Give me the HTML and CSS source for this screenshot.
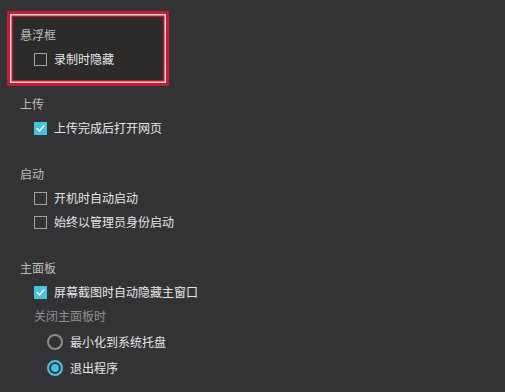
FILE: index.html
```html
<!DOCTYPE html>
<html lang="zh-CN">
<head>
<meta charset="utf-8">
<title>设置</title>
<link rel="stylesheet" href="styles.css">
</head>
<body>
<main class="page">
  <section class="group group--highlight">
    <div class="group-title">悬浮框</div>
    <label class="check-row"><span class="box"></span><span class="label">录制时隐藏</span></label>
  </section>

  <section class="group group--first">
    <div class="group-title">上传</div>
    <label class="check-row"><span class="box box--on"><svg viewBox="0 0 13 13" class="tick"><path d="M2.6 6.6 L5.3 9.4 L10.6 3.2" /></svg></span><span class="label">上传完成后打开网页</span></label>
  </section>

  <section class="group">
    <div class="group-title">启动</div>
    <label class="check-row"><span class="box"></span><span class="label">开机时自动启动</span></label>
    <label class="check-row"><span class="box"></span><span class="label">始终以管理员身份启动</span></label>
  </section>

  <section class="group">
    <div class="group-title">主面板</div>
    <label class="check-row"><span class="box box--on"><svg viewBox="0 0 13 13" class="tick"><path d="M2.6 6.6 L5.3 9.4 L10.6 3.2" /></svg></span><span class="label">屏幕截图时自动隐藏主窗口</span></label>
    <div class="sub-title">关闭主面板时</div>
    <div class="radios">
      <label class="radio-row"><span class="radio"></span><span class="label">最小化到系统托盘</span></label>
      <label class="radio-row"><span class="radio radio--on"></span><span class="label">退出程序</span></label>
    </div>
  </section>
</main>
</body>
</html>
```

FILE: styles.css
```css
html, body {
  margin: 0;
  padding: 0;
  background: #333335;
  width: 505px;
  height: 392px;
  overflow: hidden;
}

.page {
  padding: 11px 7px 0 7px;
  font-family: "Noto Sans CJK SC", "Noto Sans", sans-serif;
  font-size: 12px;
  color: #e4e4e4;
  display: flex;
  flex-direction: column;
}

.group {
  display: flex;
  flex-direction: column;
  padding-left: 13px;
  margin-top: 22px;
}

.group--first {
  margin-top: 6px;
}

.group--highlight {
  margin-top: 0;
  width: 162px;
  height: 75px;
  box-sizing: border-box;
  padding: 9px 0 0 10px;
  border: 3px solid #c41c33;
  box-shadow: inset 0 0 0 1.5px #f2d4d6, inset 0 0 0 3px #b51a2e;
  background: #2c2b29;
}

.group-title {
  height: 24px;
  line-height: 24px;
  color: #bdbdbd;
}

.check-row {
  height: 24px;
  display: flex;
  align-items: center;
  padding-left: 14px;
  gap: 7px;
}

.box {
  width: 13px;
  height: 13px;
  box-sizing: border-box;
  border: 1px solid #a2a2a2;
  flex: none;
  display: flex;
  align-items: center;
  justify-content: center;
}

.box--on {
  background: #45c3de;
  border-color: #45c3de;
}

.tick {
  width: 13px;
  height: 13px;
  fill: none;
  stroke: #ffffff;
  stroke-width: 1.6;
  stroke-linecap: square;
}

.label {
  line-height: 24px;
  color: #e6e6e6;
}

.sub-title {
  height: 24px;
  line-height: 24px;
  padding-left: 14px;
  color: #8f8f8f;
}

.radios {
  display: flex;
  flex-direction: column;
  padding-left: 27px;
  margin-top: 1px;
}

.radio-row {
  height: 26px;
  display: flex;
  align-items: center;
  gap: 7px;
}

.radio {
  width: 16px;
  height: 16px;
  box-sizing: border-box;
  border: 2px solid #8c8c8c;
  border-radius: 50%;
  flex: none;
}

.radio--on {
  border-color: #45c3de;
  background: #45c3de;
  box-shadow: inset 0 0 0 2px #2c2c2e;
}
```
